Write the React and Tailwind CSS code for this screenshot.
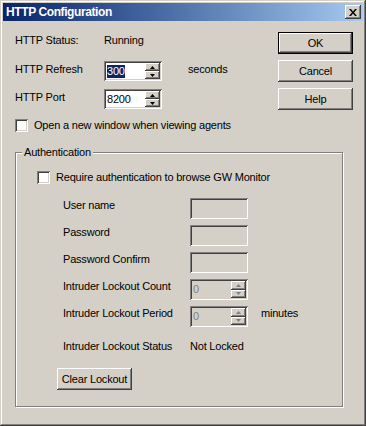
import React from "react";

const raised =
  "bg-[#d4d0c8] shadow-[inset_-1px_-1px_0_#404040,inset_1px_1px_0_#ffffff,inset_-2px_-2px_0_#808080]";
const sunken =
  "shadow-[inset_1px_1px_0_#808080,inset_-1px_-1px_0_#ffffff,inset_2px_2px_0_#404040,inset_-2px_-2px_0_#d4d0c8]";

function Arrow({ up, disabled }) {
  return (
    <svg width="5" height="3" viewBox="0 0 5 3">
      <path
        d={up ? "M2.5 0 L5 3 L0 3 Z" : "M0 0 L5 0 L2.5 3 Z"}
        fill={disabled ? "#808080" : "#000"}
      />
    </svg>
  );
}

function SpinBtn({ up, disabled }) {
  return (
    <div className={`flex-1 flex items-center justify-center ${raised}`}>
      <Arrow up={up} disabled={disabled} />
    </div>
  );
}

function Spin({ value, selected, disabled, h = "h-[20px]" }) {
  return (
    <div
      className={`${h} w-[58px] flex ${sunken} ${disabled ? "bg-[#d4d0c8]" : "bg-white"} p-[2px]`}
    >
      <div className="flex-1 flex items-center pl-[1px]">
        <span
          className={
            selected
              ? "bg-[#0a246a] text-white leading-[13px]"
              : disabled
              ? "text-[#808080] leading-[13px]"
              : "text-black leading-[13px]"
          }
        >
          {value}
        </span>
      </div>
      <div className="w-[15px] flex flex-col">
        <SpinBtn up disabled={disabled} />
        <SpinBtn disabled={disabled} />
      </div>
    </div>
  );
}

function Checkbox() {
  return <div className={`w-[13px] h-[13px] bg-white ${sunken}`} />;
}

function Button({ children, def, w = "w-[75px]" }) {
  return (
    <div
      className={`${w} h-[22px] flex items-center justify-center ${
        def
          ? "bg-[#d4d0c8] shadow-[inset_0_0_0_1px_#000,inset_-2px_-2px_0_#404040,inset_2px_2px_0_#ffffff,inset_-3px_-3px_0_#808080]"
          : raised
      }`}
    >
      {children}
    </div>
  );
}

function Row({ label, children, extra }) {
  return (
    <div className="flex items-start h-[21px]">
      <div className="w-[127px] leading-[13px] pt-[1px]">{label}</div>
      {children}
      {extra && <div className="ml-[13px] leading-[13px] pt-[1px]">{extra}</div>}
    </div>
  );
}

export default function App() {
  return (
    <div
      className="w-[366px] h-[426px] bg-[#d4d0c8] p-[3px] text-[11px] tracking-[-0.2px] text-black shadow-[inset_-1px_-1px_0_#404040,inset_1px_1px_0_#d4d0c8,inset_-2px_-2px_0_#808080,inset_2px_2px_0_#ffffff] flex flex-col overflow-hidden"
      style={{ fontFamily: '"Liberation Sans", Arial, sans-serif' }}
    >
      {/* Title bar */}
      <div className="h-[18px] flex items-center justify-between bg-gradient-to-r from-[#0a246a] to-[#a6caf0] pl-[3px] pr-[2px]">
        <span className="text-white font-bold text-[12px] tracking-[-0.4px] leading-none">
          HTTP Configuration
        </span>
        <div className={`w-[16px] h-[14px] flex items-center justify-center ${raised}`}>
          <svg width="8" height="7" viewBox="0 0 8 7">
            <path d="M0 0 L2 0 L4 2.5 L6 0 L8 0 L5 3.5 L8 7 L6 7 L4 4.5 L2 7 L0 7 L3 3.5 Z" fill="#000" />
          </svg>
        </div>
      </div>

      {/* Top section */}
      <div className="flex">
        <div className="pl-[12px] flex flex-col">
          <div className="mt-[9px] h-[20px] flex items-center">
            <div className="w-[89px]">HTTP Status:</div>
            <div>Running</div>
          </div>
          <div className="mt-[11px] h-[20px] flex items-center">
            <div className="w-[89px] -mt-[3px]">HTTP Refresh</div>
            <Spin value="300" selected />
            <div className="ml-[26px] -mt-[3px]">seconds</div>
          </div>
          <div className="mt-[8px] h-[20px] flex items-center">
            <div className="w-[89px] -mt-[3px]">HTTP Port</div>
            <Spin value="8200" />
          </div>
          <div className="mt-[9px] h-[14px] flex items-center">
            <Checkbox />
            <div className="ml-[6px]">Open a new window when viewing agents</div>
          </div>
        </div>
        <div className="ml-auto mr-[10px] mt-[11px] flex flex-col gap-[6px]">
          <Button def>OK</Button>
          <Button>Cancel</Button>
          <Button>Help</Button>
        </div>
      </div>

      {/* Authentication group */}
      <div className="relative mt-[20px] ml-[12px] w-[328px] h-[255px] border border-[#808080] shadow-[1px_1px_0_#ffffff,inset_1px_1px_0_#ffffff] flex flex-col">
        <div className="absolute -top-[8px] left-[6px] px-[2px] bg-[#d4d0c8] leading-[14px]">
          Authentication
        </div>
        <div className="mt-[17px] pl-[21px] h-[14px] flex items-center">
          <Checkbox />
          <div className="ml-[6px]">Require authentication to browse GW Monitor</div>
        </div>
        <div className="mt-[14px] pl-[47px] flex flex-col gap-[6px]">
          <Row label="User name">
            <div className={`w-[58px] h-[21px] ${sunken}`} />
          </Row>
          <Row label="Password">
            <div className={`w-[58px] h-[21px] ${sunken}`} />
          </Row>
          <Row label="Password Confirm">
            <div className={`w-[58px] h-[21px] ${sunken}`} />
          </Row>
          <Row label="Intruder Lockout Count">
            <Spin value="0" disabled h="h-[21px]" />
          </Row>
          <Row label="Intruder Lockout Period" extra="minutes">
            <Spin value="0" disabled h="h-[21px]" />
          </Row>
          <div className="mt-[3px] flex items-center h-[20px]">
            <div className="w-[127px]">Intruder Lockout Status</div>
            <div>Not Locked</div>
          </div>
        </div>
        <div className="mt-[12px] pl-[41px]">
          <Button>Clear Lockout</Button>
        </div>
      </div>
    </div>
  );
}
